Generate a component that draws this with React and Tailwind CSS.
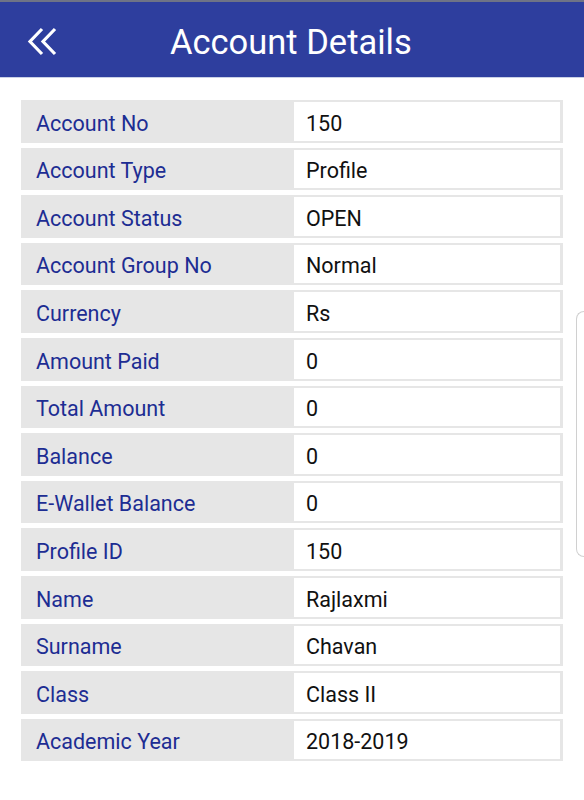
const rows = [
  ["Account No", "150"],
  ["Account Type", "Profile"],
  ["Account Status", "OPEN"],
  ["Account Group No", "Normal"],
  ["Currency", "Rs"],
  ["Amount Paid", "0"],
  ["Total Amount", "0"],
  ["Balance", "0"],
  ["E-Wallet Balance", "0"],
  ["Profile ID", "150"],
  ["Name", "Rajlaxmi"],
  ["Surname", "Chavan"],
  ["Class", "Class II"],
  ["Academic Year", "2018-2019"],
];

const App = () => {
  return (
    <div className="relative min-h-[800px] bg-white font-['Roboto',sans-serif]">
      <div className="h-[2px] bg-[#6f7386]" />
      <header className="flex h-[76px] items-center bg-[#2e3e9e] border-b border-[#c9d0e6]">
        <button className="ml-[27px] mt-[3px] flex h-[30px] w-[32px] items-center">
          <svg width="31" height="29" viewBox="0 0 31 29" fill="none">
            <path d="M15 2 L3 14.5 L15 27" stroke="white" strokeWidth="3.2" />
            <path d="M28 2 L16 14.5 L28 27" stroke="white" strokeWidth="3.2" />
          </svg>
        </button>
        <h1 className="ml-[111px] mt-[6px] text-[34.5px] leading-none text-white">Account Details</h1>
      </header>

      <div className="flex flex-col gap-[5px] pl-[21px] pr-[21px] pt-[22px]">
        {rows.map(([label, value]) => (
          <div key={label} className="flex h-[42.6px] bg-[#e6e6e6]">
            <div className="flex w-[273px] items-center pl-[15px] pt-[5px] text-[21.5px] text-[#1d2d93]">
              {label}
            </div>
            <div className="my-[2px] mr-[3px] flex flex-1 items-center bg-white pl-[12px] pt-[5px] text-[21.5px] text-[#111]">
              {value}
            </div>
          </div>
        ))}
      </div>

      <div className="absolute right-0 top-[311px] h-[246px] w-[8px] rounded-l-[8px] border border-r-0 border-[#d0d0d0]" />
    </div>
  );
};

export default App;
